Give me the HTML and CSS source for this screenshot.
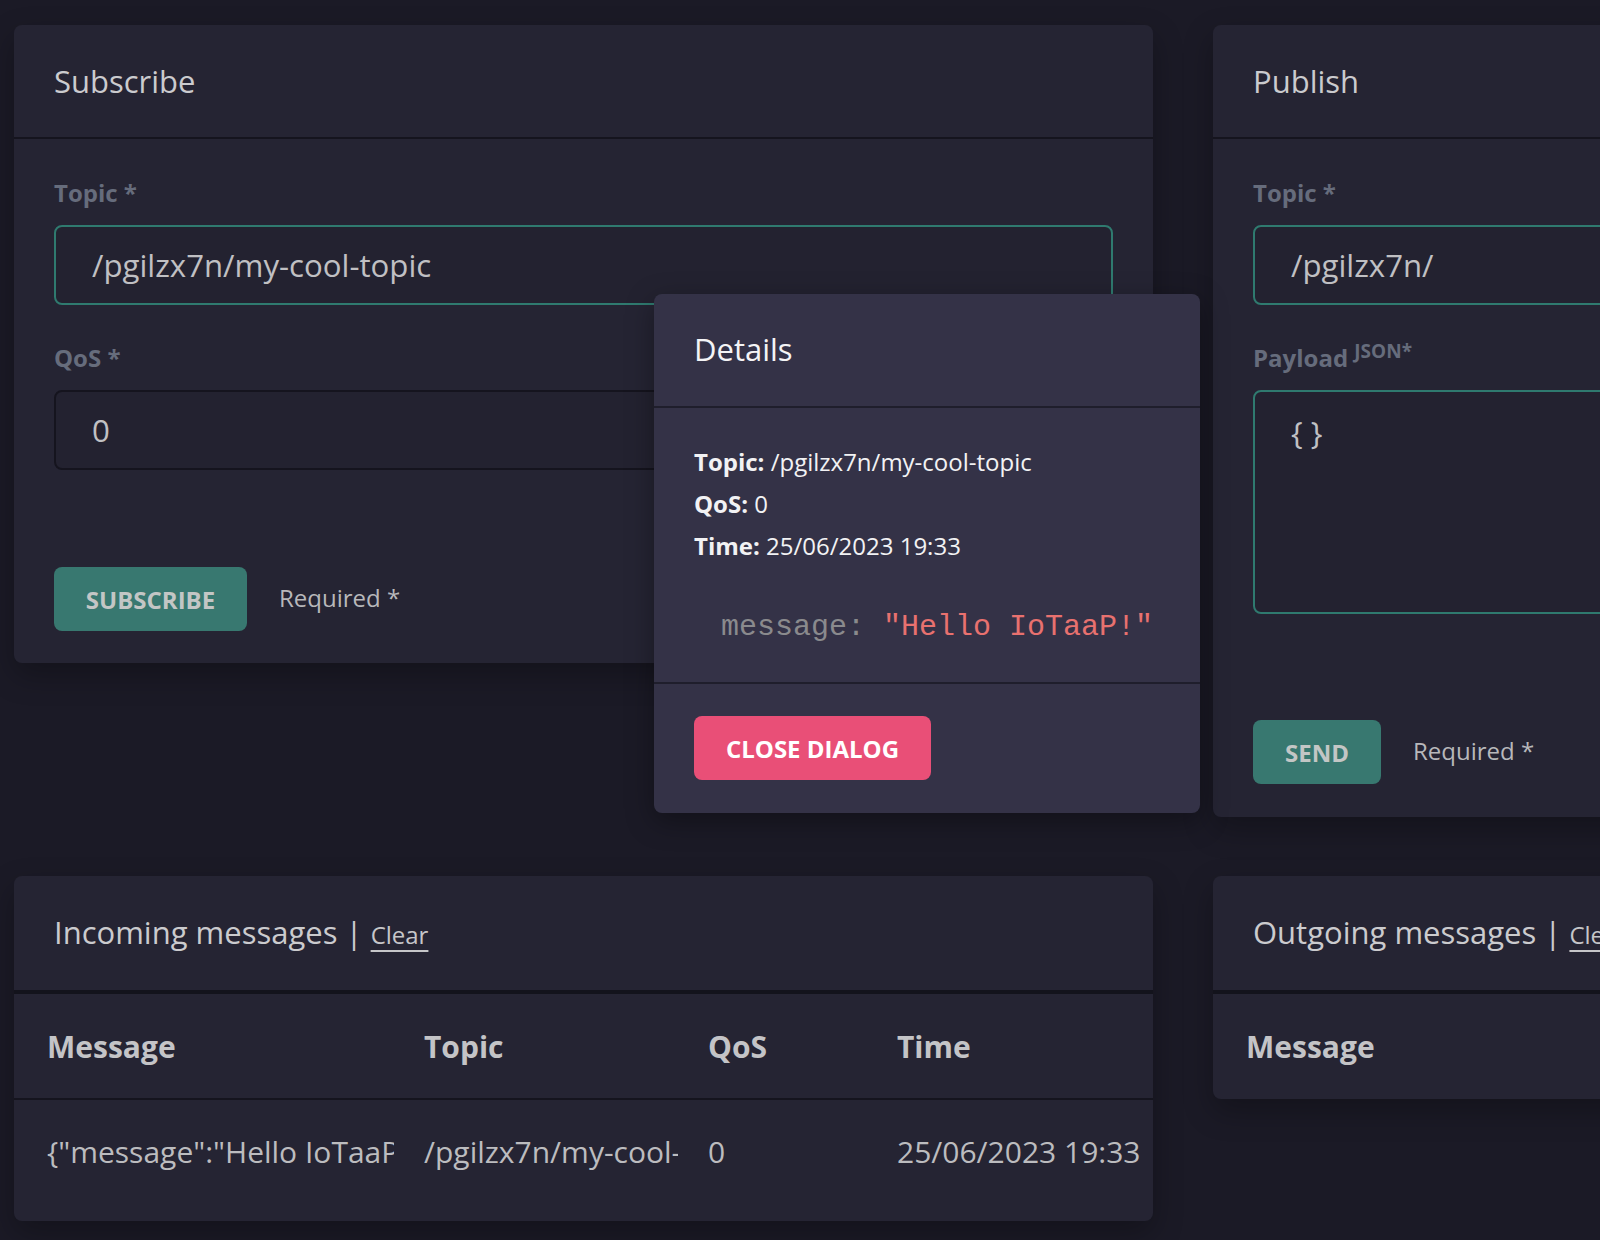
FILE: index.html
```html
<!DOCTYPE html>
<html lang="en">
<head>
<meta charset="utf-8">
<title>MQTT client</title>
<link rel="stylesheet" href="styles.css">
</head>
<body>
<div class="page">
  <section class="card">
    <header class="card-head"><h2 class="card-title">Subscribe</h2></header>
    <div class="card-body">
      <label class="field-label">Topic *</label>
      <input class="field field-active" type="text" value="/pgilzx7n/my-cool-topic" readonly>
      <label class="field-label label-gap">QoS *</label>
      <input class="field" type="text" value="0" readonly>
      <div class="actions sub-actions">
        <button class="btn btn-teal btn-sub">SUBSCRIBE</button>
        <span class="required">Required *</span>
      </div>
    </div>
  </section>

  <section class="card">
    <header class="card-head"><h2 class="card-title">Publish</h2></header>
    <div class="card-body pub-body">
      <label class="field-label">Topic *</label>
      <input class="field field-active" type="text" value="/pgilzx7n/" readonly>
      <label class="field-label label-gap">Payload <sup class="sup">JSON*</sup></label>
      <textarea class="field field-active area" readonly>{ }</textarea>
      <div class="actions pub-actions">
        <button class="btn btn-teal btn-send">SEND</button>
        <span class="required">Required *</span>
      </div>
    </div>
  </section>

  <section class="card list-card">
    <header class="card-head thick"><h2 class="card-title">Incoming messages | <a class="clear">Clear</a></h2></header>
    <table class="msgs">
      <colgroup><col class="c1"><col class="c2"><col class="c3"><col class="c4"></colgroup>
      <thead><tr><th><div class="cell">Message</div></th><th><div class="cell">Topic</div></th><th><div class="cell">QoS</div></th><th><div class="cell">Time</div></th></tr></thead>
      <tbody><tr><td><div class="cell">{"message":"Hello IoTaaP!"}</div></td><td><div class="cell">/pgilzx7n/my-cool-topic</div></td><td><div class="cell">0</div></td><td><div class="cell">25/06/2023 19:33</div></td></tr></tbody>
    </table>
  </section>

  <section class="card">
    <header class="card-head thick"><h2 class="card-title">Outgoing messages | <a class="clear">Clear</a></h2></header>
    <table class="msgs">
      <colgroup><col class="c1"><col class="c2"><col class="c3"><col class="c4"></colgroup>
      <thead><tr class="last"><th><div class="cell">Message</div></th><th><div class="cell">Topic</div></th><th><div class="cell">QoS</div></th><th><div class="cell">Time</div></th></tr></thead>
    </table>
  </section>
</div>

<div class="dialog">
  <header class="dlg-head"><h3 class="dlg-title">Details</h3></header>
  <div class="dlg-body">
    <p class="dlg-line"><b>Topic:</b> /pgilzx7n/my-cool-topic</p>
    <p class="dlg-line"><b>QoS:</b> 0</p>
    <p class="dlg-line"><b>Time:</b> 25/06/2023 19:33</p>
    <div class="code"><span class="key">message:</span> <span class="str">"Hello IoTaaP!"</span></div>
  </div>
  <footer class="dlg-foot"><button class="btn btn-pink">CLOSE DIALOG</button></footer>
</div>
</body>
</html>
```

FILE: styles.css
```css
* { box-sizing: border-box; }
html, body { margin: 0; padding: 0; }
body {
  background: #1b1a26;
  font-family: "Open Sans", "Noto Sans", sans-serif;
  color: #c6c6c9;
  width: 1600px;
  height: 1240px;
  overflow: hidden;
  position: relative;
}
.page {
  display: grid;
  grid-template-columns: 1139px 1139px;
  column-gap: 60px;
  row-gap: 59px;
  align-items: start;
  padding: 25px 0 0 14px;
  width: 2400px;
}
.card {
  background: #252433;
  border-radius: 8px;
  box-shadow: 0 12px 30px rgba(0,0,0,0.28);
  overflow: hidden;
}
.list-card { padding-bottom: 18px; }
.card-head {
  height: 114px;
  display: flex;
  align-items: center;
  padding: 0 40px;
  border-bottom: 2px solid #15141e;
}
.card-head.thick { height: 118px; border-bottom: 4px solid #13131c; padding-bottom: 3px; }
.card-title {
  margin: 0;
  font-size: 31px;
  font-weight: 400;
  color: #cbcbce;
}
.clear {
  font-size: 24px;
  text-decoration: underline;
  text-underline-offset: 6px;
  text-decoration-thickness: 2px;
  color: #c6c6c9;
}
.card-body { padding: 38px 40px 32px; display: flex; flex-direction: column; }
.pub-body { padding-bottom: 33px; }
.field-label {
  font-size: 24px;
  font-weight: 700;
  color: #666c7c;
  line-height: 32px;
  margin-bottom: 16px;
}
.label-gap { margin-top: 37px; }
.sup { font-size: 19px; vertical-align: 9px; line-height: 0; }
.field {
  display: block;
  width: 100%;
  height: 80px;
  background: #232230;
  border: 2px solid #15141e;
  border-radius: 8px;
  padding: 0 36px;
  font-family: inherit;
  font-size: 31.2px;
  color: #c0c0c3;
  outline: none;
}
.field-active { border-color: #2f7a6f; }
.area { height: 224px; resize: none; padding: 20px 36px; line-height: 40px; }
.actions { display: flex; align-items: center; gap: 32px; }
.sub-actions { margin-top: 97px; }
.pub-actions { margin-top: 106px; }
.btn {
  border: none;
  border-radius: 8px;
  height: 64px;
  font-family: inherit;
  font-size: 24px;
  font-weight: 700;
  padding: 0;
}
.btn-teal { background: #387870; color: #c3c6c5; }
.btn-sub { width: 193px; }
.btn-send { width: 128px; }
.required { font-size: 24px; color: #b8b8bb; margin-top: -3px; }

.msgs {
  table-layout: fixed;
  border-collapse: collapse;
  width: 100%;
}
.c1 { width: 410px; }
.c2 { width: 284px; }
.c3 { width: 189px; }
.c4 { width: auto; }
.msgs th, .msgs td {
  text-align: left;
  padding: 0 30px 0 0;
  font-size: 30px;
}
.msgs th:first-child, .msgs td:first-child { padding-left: 33px; }
.msgs td:last-child, .msgs th:last-child { padding-right: 0; }
.cell { white-space: nowrap; overflow: hidden; }
.msgs th {
  height: 105px;
  font-weight: 700;
  color: #c4c4c7;
  border-bottom: 2px solid #15141e;
}
.msgs tr.last th { border-bottom: none; }
.msgs td {
  height: 104px;
  font-weight: 400;
  color: #bcbcbf;
}

.dialog {
  position: absolute;
  left: 654px;
  top: 294px;
  width: 546px;
  background: #343247;
  border-radius: 8px;
  box-shadow: 0 8px 28px rgba(0,0,0,0.35);
  color: #f2f2f4;
}
.dlg-head {
  height: 114px;
  display: flex;
  align-items: center;
  padding: 0 40px 2px;
  border-bottom: 2px solid #1f1e2c;
}
.dlg-title { margin: 0; font-size: 31px; font-weight: 400; color: #f4f4f6; }
.dlg-body { padding: 33px 40px 37px; }
.dlg-line { margin: 0; font-size: 24px; line-height: 42px; }
.dlg-line b { font-weight: 700; }
.code {
  margin-top: 42px;
  padding: 0 0 0 27px;
  font-family: "Liberation Mono", "Courier New", monospace;
  font-size: 30px;
  line-height: 36px;
  white-space: pre;
}
.key { color: #8a8a8d; }
.str { color: #e8716f; }
.dlg-foot { padding: 32px 40px 33px; border-top: 2px solid #1f1e2c; }
.btn-pink { background: #e94f77; color: #ffffff; width: 237px; }
```
